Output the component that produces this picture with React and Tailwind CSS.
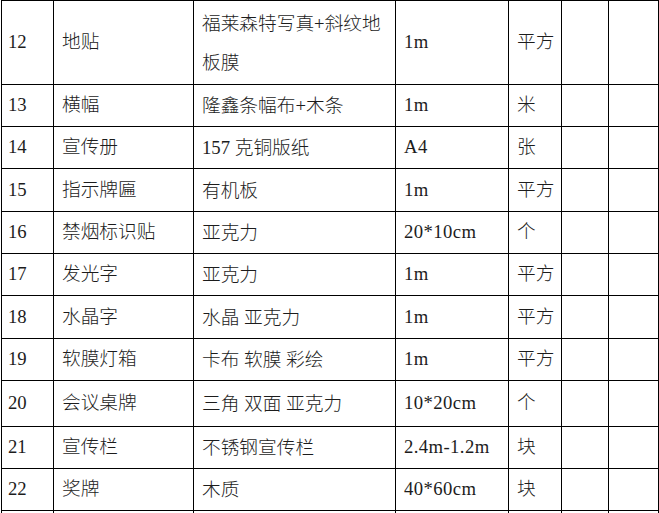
import React from "react";

// rows of the material list: no., name, material, size, unit
const rows = [
  { h: "h-[84px]", no: "12", name: "地贴", mat: ["福莱森特写真+斜纹地", "板膜"], size: "1m", unit: "平方" },
  { h: "h-[42px]", no: "13", name: "横幅", mat: ["隆鑫条幅布+木条"], size: "1m", unit: "米" },
  { h: "h-[42px]", no: "14", name: "宣传册", mat: ["157 克铜版纸"], size: "A4", unit: "张" },
  { h: "h-[43px]", no: "15", name: "指示牌匾", mat: ["有机板"], size: "1m", unit: "平方" },
  { h: "h-[42px]", no: "16", name: "禁烟标识贴", mat: ["亚克力"], size: "20*10cm", unit: "个" },
  { h: "h-[42px]", no: "17", name: "发光字", mat: ["亚克力"], size: "1m", unit: "平方" },
  { h: "h-[43px]", no: "18", name: "水晶字", mat: ["水晶 亚克力"], size: "1m", unit: "平方" },
  { h: "h-[42px]", no: "19", name: "软膜灯箱", mat: ["卡布 软膜 彩绘"], size: "1m", unit: "平方" },
  { h: "h-[46px]", no: "20", name: "会议桌牌", mat: ["三角 双面 亚克力"], size: "10*20cm", unit: "个" },
  { h: "h-[42px]", no: "21", name: "宣传栏", mat: ["不锈钢宣传栏"], size: "2.4m-1.2m", unit: "块" },
  { h: "h-[42px]", no: "22", name: "奖牌", mat: ["木质"], size: "40*60cm", unit: "块" },
  { h: "h-[43px]", no: "", name: "", mat: [""], size: "", unit: "" },
];

const cell = "flex items-center border-r border-b border-black pl-2 shrink-0";

export default function App() {
  return (
    <div
      className="h-[513px] w-[659px] overflow-hidden bg-white text-[#1c1c1c] text-[18.7px] font-light"
      style={{ fontFamily: '"Liberation Serif", "Noto Sans CJK SC", serif' }}
    >
      <div className="ml-px w-[658px] border-l border-t border-black">
        {rows.map((r, i) => (
          <div key={i} className={`flex ${r.h}`}>
            <div className={`${cell} w-[52px] pl-[6px]`}>{r.no}</div>
            <div className={`${cell} w-[140px]`}>{r.name}</div>
            <div className={`${cell} w-[202px]`}>
              <div className="leading-[39px] whitespace-pre">
                {r.mat.map((m, j) => (
                  <div key={j}>{m}</div>
                ))}
              </div>
            </div>
            <div className={`${cell} w-[113px] tracking-[0.4px]`}>{r.size}</div>
            <div className={`${cell} w-[53px]`}>{r.unit}</div>
            <div className={`${cell} w-[47px]`}></div>
            <div className={`${cell} w-[50px]`}></div>
          </div>
        ))}
      </div>
    </div>
  );
}
